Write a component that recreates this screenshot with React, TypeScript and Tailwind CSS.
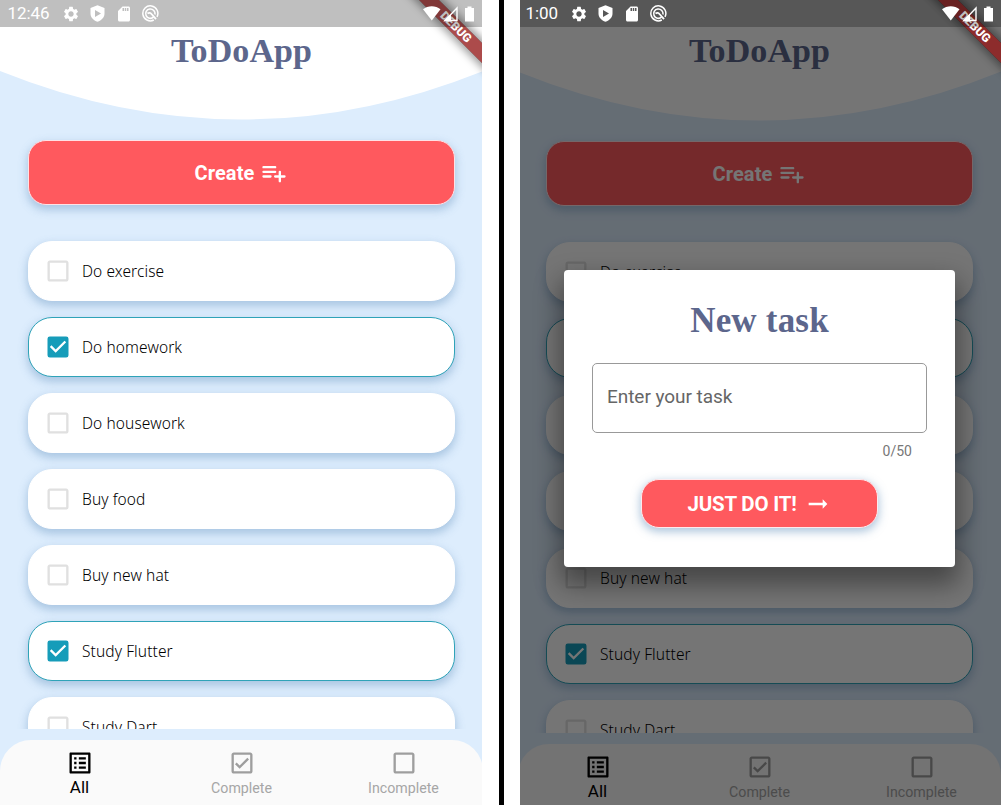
import React from "react";
import { MdSettings, MdListAlt, MdOutlineCheckBox, MdCheckBox, MdCheckBoxOutlineBlank, MdArrowRightAlt, MdSdCard } from "react-icons/md";

const tasks = [
  { name: "Do exercise", done: false },
  { name: "Do homework", done: true },
  { name: "Do housework", done: false },
  { name: "Buy food", done: false },
  { name: "Buy new hat", done: false },
  { name: "Study Flutter", done: true },
  { name: "Study Dart", done: false },
];

function StatusBar({ time }: { time: string }) {
  return (
    <div className="absolute inset-x-0 top-0 flex h-[27px] items-center bg-black/25 pl-[7.5px] pr-[7px] text-white">
      <span className="text-[17px] leading-none tracking-[-0.1px]">{time}</span>
      <div className="ml-[12.5px] flex items-center gap-[9px]">
        <MdSettings className="size-[18px]" />
        <svg className="size-[17px]" viewBox="0 0 17 17">
          <path fill="currentColor" fillRule="evenodd" d="M8.5.3 15.5 3v5.4c0 3.9-2.9 6.9-7 8.3-4.100-1.400-7-4.400-7-8.300V3zM6 5v7l6-3.500z" />
        </svg>
        <MdSdCard className="size-[18px]" />
        <svg className="size-[17px]" viewBox="0 0 17 17" fill="none" stroke="currentColor">
          <path strokeWidth="1.500" d="M15 11.800A7.500 7.500 0 1 0 11.800 15" />
          <path strokeWidth="1.600" d="M11.500 12.200A4.700 4.700 0 1 1 13 9.500" />
          <path strokeWidth="1.800" d="M5.500 8.500c1.500-1.200 3-.800 4 .500l4.500 5.200" />
        </svg>
      </div>
      <svg className="ml-auto h-[16px] w-[52px]" viewBox="0 0 52 16">
        <path fill="#fff" d="M0 3.200C5-.900 12.500-.900 17.500 3.200L8.800 14.500z" />
        <path fill="none" stroke="#fff" strokeWidth="1.400" d="M34 2v12.500H22z" />
        <path fill="#fff" d="M20.500 15.200 28 8v7.200z" />
        <path fill="#fff" d="M42 2h2.500V.500h4V2H51v13.500h-9z" />
      </svg>
    </div>
  );
}

function DebugBanner() {
  return (
    <div className="absolute right-0 top-0 size-[90px] overflow-hidden">
      <div className="absolute left-[4px] top-[20px] h-[14px] w-[120px] rotate-45 bg-black/40 shadow-[0_0_9px_3px_rgba(0,0,0,0.4)]" />
      <div className="absolute left-[4px] top-[20px] flex h-[14px] w-[120px] rotate-45 items-center justify-center bg-[#b71c1ca0] text-[12px] font-black leading-none text-white">
        DEBUG
      </div>
    </div>
  );
}

function Task({ name, done }: { name: string; done: boolean }) {
  return (
    <div
      className={
        "flex h-[60px] shrink-0 items-center rounded-[24px] border bg-white pl-[15px] shadow-[0_4px_9px_1px_rgba(100,145,190,0.42)] " +
        (done ? "border-[#2fa3b8]" : "border-white")
      }
    >
      {done ? <MdCheckBox className="size-[28px] text-[#169cb9]" /> : <MdCheckBoxOutlineBlank className="size-[28px] text-[#e0e0e0]" />}
      <span className="ml-[10px] font-['Noto_Sans',sans-serif] text-[15.5px] font-light leading-[24px] tracking-[0.1px] text-black">{name}</span>
    </div>
  );
}

function NavItem({ label, active, children }: { label: string; active?: boolean; children: React.ReactNode }) {
  return (
    <div className={"flex w-[162px] shrink-0 flex-col items-center pt-[9px] " + (active ? "text-black" : "text-[#9e9e9e]")}>
      {children}
      <span className={active ? "text-[17px] leading-[20px]" : "pt-px text-[14.2px] leading-[20px] text-[#a6a6a6]"}>{label}</span>
    </div>
  );
}

function Screen({ late = false }: { late?: boolean }) {
  return (
    <div className="flex h-full w-[483px] flex-col bg-[#ddedfd]">
      <header className={late ? "relative h-[121px] shrink-0" : "relative h-[120px] shrink-0"}>
        <svg className="absolute inset-0 size-full" viewBox="0 0 483 120" preserveAspectRatio="none">
          <path fill="#fff" d="M0 0H483V71Q241.500 168 0 71Z" />
        </svg>
        <h1 className="relative pt-[31px] text-center font-['Liberation_Serif',serif] text-[34px] font-bold leading-[40px] tracking-[0.1px] text-[#5c668c]">ToDoApp</h1>
      </header>
      <div className="px-[28px] pt-[20px]">
        <button className="flex h-[65px] w-full items-center justify-center gap-[6px] rounded-[18px] border border-[#ffe1e5] bg-[#ff595e] text-[20px] font-bold tracking-[0.1px] text-white shadow-[0_4px_9px_1px_rgba(100,145,190,0.42)]">
          Create
          <svg className="size-[28px]" viewBox="0 0 24 24" fill="none" stroke="currentColor" strokeWidth="2" strokeLinecap="round">
            <path d="M3 7h10M3 11h10M3 15h6M17 11v8M13 15h8" />
          </svg>
        </button>
      </div>
      <div className={"flex min-h-0 flex-1 flex-col overflow-hidden px-[28px] pt-[36px] " + (late ? "gap-[16.400px]" : "gap-[16px]")}>
        {tasks.map((t) => (
          <Task key={t.name} {...t} />
        ))}
      </div>
      <nav className={"mt-[11px] flex shrink-0 justify-center overflow-hidden rounded-t-[31px] bg-[#fafafa] " + (late ? "h-[61px]" : "h-[65px]")}>
        <NavItem label="All" active>
          <MdListAlt className="size-[28px] shrink-0" />
        </NavItem>
        <NavItem label="Complete">
          <MdOutlineCheckBox className="size-[28px] shrink-0" />
        </NavItem>
        <NavItem label="Incomplete">
          <MdCheckBoxOutlineBlank className="size-[28px] shrink-0" />
        </NavItem>
      </nav>
    </div>
  );
}

function NewTaskDialog() {
  return (
    <div className="flex h-[296.5px] w-[391px] flex-col items-center rounded-[4px] bg-white pt-[31px] shadow-[0_14px_26px_4px_rgba(0,0,0,0.4)]">
      <h2 className="font-['Liberation_Serif',serif] text-[35px] font-bold leading-[40px] tracking-[0.2px] text-[#5c668c]">New task</h2>
      <div className="mt-[22px] flex h-[70px] w-[335px] items-center rounded-[5px] border border-[#999] pb-[2px] pl-[14px] text-[19px] tracking-[-0.05px] text-[#666]">
        Enter your task
      </div>
      <div className="mt-[8px] w-[335px] pr-[15px] text-right text-[14px] leading-[20px] text-[#777]">0/50</div>
      <button className="mt-[18px] flex h-[49px] w-[237px] items-center justify-center gap-[7px] rounded-[18px] border border-[#ffe9ec] bg-[#ff595e] pt-px text-[20.5px] font-bold tracking-[-0.2px] text-white shadow-[0_3px_8px_1px_rgba(100,145,190,0.5)]">
        JUST DO IT!
        <MdArrowRightAlt className="size-[28px]" />
      </button>
    </div>
  );
}

export default function App() {
  return (
    <div className="flex h-[805px] w-[1002px] overflow-hidden bg-white font-[Roboto,sans-serif]">
      <div className="relative w-[482px] shrink-0 overflow-hidden">
        <Screen />
        <DebugBanner />
        <StatusBar time="12:46" />
      </div>
      <div className="ml-[17px] w-[5px] shrink-0 bg-black" />
      <div className="ml-[16px] w-[481px] shrink-0 overflow-hidden">
        <div className="relative -ml-[2px] h-full w-[483px]">
          <Screen late />
          <div className="absolute inset-0 flex items-start bg-black/54 pl-[46px] pt-[270px]">
            <NewTaskDialog />
          </div>
          <DebugBanner />
          <StatusBar time="1:00" />
        </div>
      </div>
    </div>
  );
}
